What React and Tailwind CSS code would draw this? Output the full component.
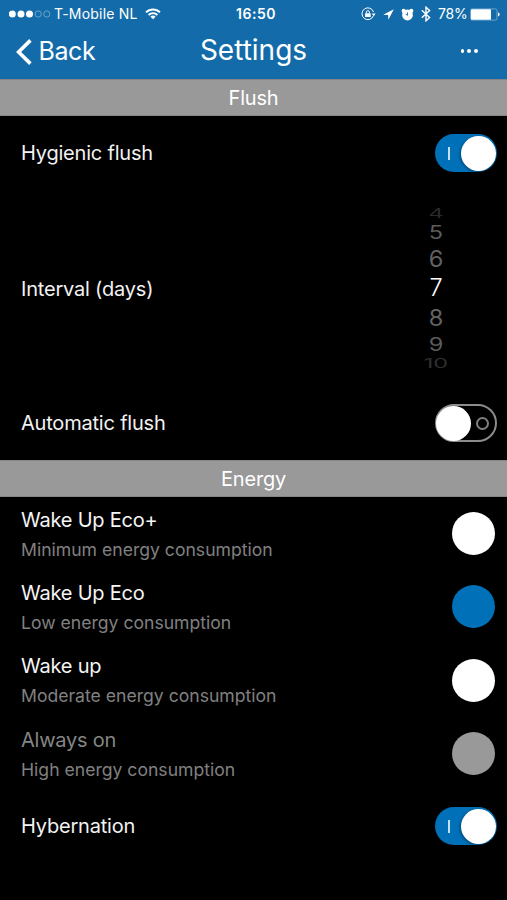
import { useState } from 'react';
import clsx from 'clsx';

const DAYS = [
  { value: 4, className: 'h-4 text-[#2a2a2a]', scale: 0.58 },
  { value: 5, className: 'h-[23px] text-[#5c5c5c]', scale: 0.78 },
  { value: 6, className: 'h-[29px] text-[#636363]', scale: 0.95 },
  { value: 7, className: 'h-[30px] font-light text-white', scale: 1 },
  { value: 8, className: 'h-[30px] text-[#636363]', scale: 0.95 },
  { value: 9, className: 'h-[23px] text-[#5c5c5c]', scale: 0.8 },
  { value: 10, className: 'h-4 text-[#2f2f2f]', scale: 0.53 },
];

const MODES = [
  { id: 'eco-plus', title: 'Wake Up Eco+', detail: 'Minimum energy consumption' },
  { id: 'eco', title: 'Wake Up Eco', detail: 'Low energy consumption' },
  { id: 'wake', title: 'Wake up', detail: 'Moderate energy consumption' },
  { id: 'always', title: 'Always on', detail: 'High energy consumption', disabled: true },
];

function StatusBar() {
  return (
    <div className="grid h-7 grid-cols-[1fr_auto_1fr] items-center pl-[9px] pr-[7px] text-[14px] leading-none text-white">
      <div className="flex items-center">
        <svg width="42" height="10" viewBox="0 0 42 10" className="mr-[3px]">
          <circle cx="3.3" cy="5" r="3.5" fill="#fff" />
          <circle cx="12" cy="5" r="3.5" fill="#fff" />
          <circle cx="20.5" cy="5" r="3.5" fill="#fff" />
          <g fill="none" stroke="#6fa9d3" strokeWidth="0.9">
            <circle cx="29.2" cy="5" r="3.1" />
            <circle cx="37.8" cy="5" r="3.1" />
          </g>
        </svg>
        <span className="w-[83px] whitespace-nowrap tracking-[0.2px]">T-Mobile NL</span>
        <svg width="16" height="12" viewBox="0 0 16 12" className="ml-2" fill="none" stroke="#fff" strokeWidth="1.8">
          <path d="M1 4.4a9.9 9.9 0 0 1 14 0" />
          <path d="M3.6 7a6.2 6.2 0 0 1 8.8 0" />
          <path d="M8 11.3 5.4 8.8a3.7 3.7 0 0 1 5.2 0Z" fill="#fff" stroke="none" />
        </svg>
      </div>
      <span className="pl-[3px] text-[14px] font-semibold tracking-[0.5px]">16:50</span>
      <div className="flex items-center justify-end">
        {/* rotation lock */}
        <svg width="15" height="14" viewBox="0 0 15 14" fill="none" stroke="#fff">
          <path d="M12.4 8.8A5.9 5.9 0 1 1 12.5 5" strokeWidth="1" />
          <path d="m10.7 6.6 4 0-2 2.6Z" fill="#fff" stroke="none" />
          <rect x="4.1" y="6.2" width="5.6" height="3.9" rx="0.4" fill="#fff" stroke="none" />
          <path d="M5.4 6.4V5.2a1.5 1.5 0 0 1 3 0v1.2" strokeWidth="1" />
        </svg>
        <svg width="11" height="11" viewBox="0 0 11 11" className="ml-[7px]" fill="#fff">
          <path d="M10.8.3.2 5.7l4.9.3.3 4.8Z" />
        </svg>
        {/* alarm */}
        <svg width="13" height="13" viewBox="0 0 13 13" className="ml-[7px]">
          <circle cx="2.7" cy="2.9" r="2.1" fill="#fff" />
          <circle cx="10.3" cy="2.9" r="2.1" fill="#fff" />
          <circle cx="6.5" cy="7" r="5.4" fill="#fff" />
          <path d="M6.5 4.4v2.9L4.7 6.1" fill="none" stroke="#136ca9" strokeWidth="0.9" />
        </svg>
        <svg width="10" height="16" viewBox="0 0 10 16" className="ml-[7px]" fill="none" stroke="#fff" strokeWidth="1.4">
          <path d="m.8 4.3 7.8 7.1L5 14.8V1.2l3.6 3.4L.8 11.7" />
        </svg>
        <span className="ml-[7px] w-[29px] whitespace-nowrap tracking-[-0.2px]">78%</span>
        <svg width="30" height="13" viewBox="0 0 30 13" className="ml-[3px]">
          <rect x="0.5" y="0.9" width="26.5" height="11.2" rx="1.6" fill="none" stroke="#7fb2d8" strokeWidth="0.8" />
          <rect x="1" y="1.3" width="20" height="10.4" rx="0.8" fill="#fff" />
          <path d="M28 4.6c2.2.7 2.2 3.1 0 3.8Z" fill="#fff" />
        </svg>
      </div>
    </div>
  );
}

function NavBar() {
  return (
    <div className="grid h-[51px] grid-cols-[1fr_auto_1fr] items-start text-white">
      <button className="flex h-[46px] items-center pl-4 text-left">
        <svg width="17" height="26" viewBox="0 0 17 26" className="mt-0.5" fill="none" stroke="#fff" strokeWidth="3.6">
          <path d="M14.4 1.4 2.6 13l11.8 11.6" />
        </svg>
        <span className="ml-[5.5px] text-[25px] leading-none tracking-[-0.4px]">Back</span>
      </button>
      <h1 className="text-[28px] leading-[44px]">Settings</h1>
      <button className="flex h-[46px] items-center justify-end gap-[3px] pr-[29px]">
        <span className="size-[3.8px] rounded-full bg-white" />
        <span className="size-[3.8px] rounded-full bg-white" />
        <span className="size-[3.8px] rounded-full bg-white" />
      </button>
    </div>
  );
}

function SectionHeader({ children }) {
  return (
    <h2 className="h-[37px] border-y border-[#858585] bg-[#999] text-center text-[20px] leading-[37px] tracking-[-0.2px] text-white">
      {children}
    </h2>
  );
}

function Toggle({ checked, onChange }) {
  return (
    <button
      role="switch"
      aria-checked={checked}
      onClick={() => onChange(!checked)}
      className={clsx(
        'flex h-[38px] w-[62px] items-center rounded-full',
        checked ? 'bg-[#0070b8] pr-px' : 'border-2 border-[#8c8c8c] bg-black'
      )}
    >
      {checked ? (
        <>
          <span className="ml-[13px] h-[13px] w-[1.5px] bg-[#c5e0f2]" />
          <span className="ml-auto size-[35px] rounded-full bg-white shadow-[-1px_1px_3px_rgba(0,0,0,0.35)]" />
        </>
      ) : (
        <>
          <span className="-ml-[1.5px] size-[35px] shrink-0 rounded-full bg-white" />
          <span className="ml-[5px] size-[13px] shrink-0 rounded-full border-2 border-[#808080]" />
        </>
      )}
    </button>
  );
}

function Row({ label, className, children }) {
  return (
    <div className={clsx('flex items-center justify-between pl-[21px] pr-2.5', className)}>
      <span className="text-[20px] tracking-[-0.2px] text-[#f2f2f2]">{label}</span>
      {children}
    </div>
  );
}

export default function App() {
  const [hygienic, setHygienic] = useState(true);
  const [automatic, setAutomatic] = useState(false);
  const [hybernation, setHybernation] = useState(true);
  const [mode, setMode] = useState('eco');

  return (
    <div className="h-[900px] w-[507px] overflow-hidden bg-black font-[Inter,sans-serif]">
      <header className="bg-[#136ca9]">
        <StatusBar />
        <NavBar />
      </header>

      <SectionHeader>Flush</SectionHeader>
      <Row label="Hygienic flush" className="h-[74px]">
        <Toggle checked={hygienic} onChange={setHygienic} />
      </Row>
      <Row label="Interval (days)" className="h-[196px] pt-px">
        <div className="mr-[39px] flex w-11 flex-col items-center text-[23.5px]">
          {DAYS.map(({ value, className, scale }) => (
            <div
              key={value}
              className={clsx('flex items-center', className)}
              style={{ transform: `scaleY(${scale})` }}
            >
              {value}
            </div>
          ))}
        </div>
      </Row>
      <Row label="Automatic flush" className="h-[74px]">
        <Toggle checked={automatic} onChange={setAutomatic} />
      </Row>

      <SectionHeader>Energy</SectionHeader>
      {MODES.map(({ id, title, detail, disabled }) => (
        <div key={id} className="flex h-[73.25px] items-center justify-between pl-[21px] pr-3">
          <div className="pt-[2.35px]">
            <p
              className={clsx(
                'text-[20px] leading-[30px] tracking-[-0.22px]',
                disabled ? 'text-[#858585]' : 'text-[#f5f5f5]'
              )}
            >
              {title}
            </p>
            <p className="text-[17.6px] leading-[30px] text-[#808080]">{detail}</p>
          </div>
          <button
            aria-label={title}
            disabled={disabled}
            onClick={() => setMode(id)}
            className={clsx(
              'size-[43px] rounded-full',
              disabled ? 'bg-[#999]' : mode === id ? 'bg-[#0070b8]' : 'bg-white'
            )}
          />
        </div>
      ))}
      <Row label="Hybernation" className="h-[72px]">
        <Toggle checked={hybernation} onChange={setHybernation} />
      </Row>
    </div>
  );
}
